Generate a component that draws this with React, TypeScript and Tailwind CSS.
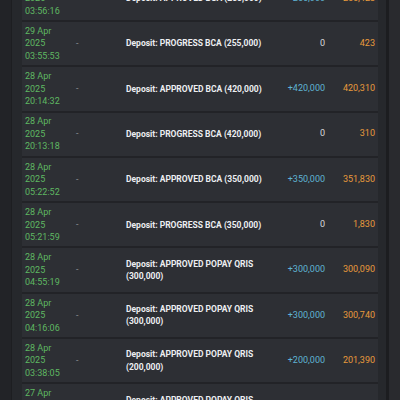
import React from 'react';

interface Tx {
  day: string;
  year: string;
  time: string;
  desc: string;
  amount: string;
  balance: string;
}

const rows: Tx[] = [
  { day: '29 Apr', year: '2025', time: '03:56:16', desc: 'Deposit: APPROVED BCA (255,000)', amount: '+255,000', balance: '255,423' },
  { day: '29 Apr', year: '2025', time: '03:55:53', desc: 'Deposit: PROGRESS BCA (255,000)', amount: '0', balance: '423' },
  { day: '28 Apr', year: '2025', time: '20:14:32', desc: 'Deposit: APPROVED BCA (420,000)', amount: '+420,000', balance: '420,310' },
  { day: '28 Apr', year: '2025', time: '20:13:18', desc: 'Deposit: PROGRESS BCA (420,000)', amount: '0', balance: '310' },
  { day: '28 Apr', year: '2025', time: '05:22:52', desc: 'Deposit: APPROVED BCA (350,000)', amount: '+350,000', balance: '351,830' },
  { day: '28 Apr', year: '2025', time: '05:21:59', desc: 'Deposit: PROGRESS BCA (350,000)', amount: '0', balance: '1,830' },
  { day: '28 Apr', year: '2025', time: '04:55:19', desc: 'Deposit: APPROVED POPAY QRIS (300,000)', amount: '+300,000', balance: '300,090' },
  { day: '28 Apr', year: '2025', time: '04:16:06', desc: 'Deposit: APPROVED POPAY QRIS (300,000)', amount: '+300,000', balance: '300,740' },
  { day: '28 Apr', year: '2025', time: '03:38:05', desc: 'Deposit: APPROVED POPAY QRIS (200,000)', amount: '+200,000', balance: '201,390' },
  { day: '27 Apr', year: '2025', time: '23:41:10', desc: 'Deposit: APPROVED POPAY QRIS (100,000)', amount: '+100,000', balance: '101,390' },
];

export default function App() {
  return (
    <div className="flex h-[400px] w-[400px] overflow-hidden bg-[#222327]" style={{ fontFamily: 'Roboto, "Liberation Sans", sans-serif' }}>
      {/* left gutter */}
      <div className="w-[12px] shrink-0 border-r border-[#1d1e21]" />

      {/* history panel */}
      <main className="w-[374px] shrink-0 overflow-hidden bg-[#26282c] pl-[10px] pr-[8px]">
        <div className="-mt-[23.3px] flex flex-col">
          {rows.map((r, i) => (
            <div
              key={i}
              className="grid h-[45.3px] grid-cols-[51px_50px_150px_49px_50px] items-center border-b-2 border-[#222327] bg-[#2d2f34] pl-[3px] pr-[3px] text-[9px]"
            >
              <div className="leading-[12.5px] text-[#5fb862]">
                <p>{r.day}</p>
                <p>{r.year}</p>
                <p>{r.time}</p>
              </div>
              <div className="text-[#8d9096]">-</div>
              <div className="text-[8.5px] font-bold leading-[12.5px] text-[#eceef1]">{r.desc}</div>
              <div className={r.amount === '0' ? 'text-right text-[#d8dade]' : 'text-right text-[#5fb3d3]'}>{r.amount}</div>
              <div className="text-right text-[#e89a3c]">{r.balance}</div>
            </div>
          ))}
        </div>
      </main>

      {/* scrollbar track */}
      <div className="w-[14px] shrink-0 border-l-[3px] border-[#1c1d20] bg-[#292a2e]" />
    </div>
  );
}
